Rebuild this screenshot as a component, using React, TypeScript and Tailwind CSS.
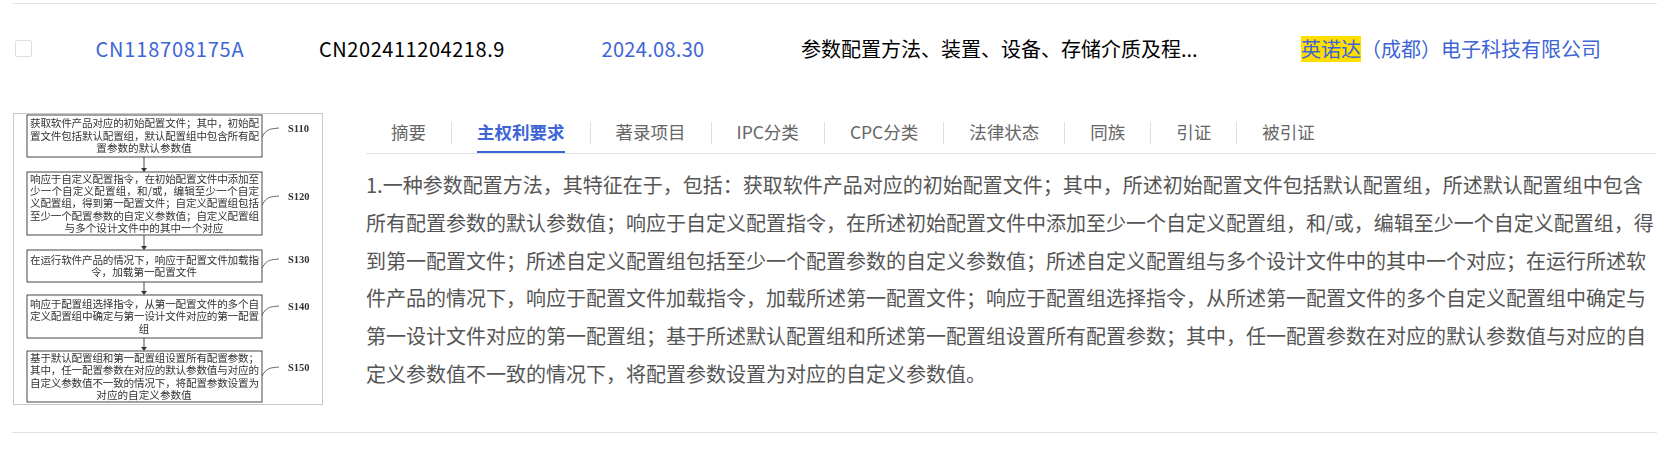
import React from 'react';

const tabs = ['摘要', '主权利要求', '著录项目', 'IPC分类', 'CPC分类', '法律状态', '同族', '引证', '被引证'];

const claim =
  '1.一种参数配置方法，其特征在于，包括：获取软件产品对应的初始配置文件；其中，所述初始配置文件包括默认配置组，所述默认配置组中包含所有配置参数的默认参数值；响应于自定义配置指令，在所述初始配置文件中添加至少一个自定义配置组，和/或，编辑至少一个自定义配置组，得到第一配置文件；所述自定义配置组包括至少一个配置参数的自定义参数值；所述自定义配置组与多个设计文件中的其中一个对应；在运行所述软件产品的情况下，响应于配置文件加载指令，加载所述第一配置文件；响应于配置组选择指令，从所述第一配置文件的多个自定义配置组中确定与第一设计文件对应的第一配置组；基于所述默认配置组和所述第一配置组设置所有配置参数；其中，任一配置参数在对应的默认参数值与对应的自定义参数值不一致的情况下，将配置参数设置为对应的自定义参数值。';

const steps = [
  { y: 2, h: 42, label: 'S110', labelY: 17, lines: [['获取软件产品对应的初始配置文件；其中，初始配', 1], ['置文件包括默认配置组，默认配置组中包含所有配', 1], ['置参数的默认参数值', 0]] },
  { y: 59, h: 63, label: 'S120', labelY: 85, lines: [['响应于自定义配置指令，在初始配置文件中添加至', 1], ['少一个自定义配置组，和/或，编辑至少一个自定', 1], ['义配置组，得到第一配置文件；自定义配置组包括', 1], ['至少一个配置参数的自定义参数值；自定义配置组', 1], ['与多个设计文件中的其中一个对应', 0]] },
  { y: 137, h: 32, label: 'S130', labelY: 148, lines: [['在运行软件产品的情况下，响应于配置文件加载指', 1], ['令，加载第一配置文件', 0]] },
  { y: 182, h: 43, label: 'S140', labelY: 195, lines: [['响应于配置组选择指令，从第一配置文件的多个自', 1], ['定义配置组中确定与第一设计文件对应的第一配置', 1], ['组', 0]] },
  { y: 238, h: 51, label: 'S150', labelY: 256, lines: [['基于默认配置组和第一配置组设置所有配置参数；', 1], ['其中，任一配置参数在对应的默认参数值与对应的', 1], ['自定义参数值不一致的情况下，将配置参数设置为', 1], ['对应的自定义参数值', 0]] },
] as const;

function FlowChart() {
  return (
    <svg width="310" height="292" viewBox="0 0 310 292" className="block shrink-0 blur-[0.35px]">
      <rect x="0.5" y="0.5" width="309" height="291" fill="#fff" stroke="#c8c8c8" />
      {steps.map((s, i) => {
        const next = steps[i + 1];
        return (
          <g key={s.label}>
            <rect x="14" y={s.y} width="235" height={s.h} fill="#fff" stroke="#333" strokeWidth="0.9" />
            {s.lines.map(([text, full], j) => {
              const top = s.y + (s.h - s.lines.length * 12.4) / 2 + 10 + j * 12.4;
              return (
                <text
                  key={j}
                  x={full ? 17 : 131}
                  y={top}
                  fontSize="10.6"
                  fill="#333"
                  textAnchor={full ? 'start' : 'middle'}
                  textLength={full ? 229 : undefined}
                  fontFamily="'Noto Sans CJK SC', sans-serif"
                >
                  {text}
                </text>
              );
            })}
            <path
              d={`M249 ${s.labelY + 7} C254 ${s.labelY - 2} 258 ${s.labelY - 1} 266 ${s.labelY - 2}`}
              fill="none"
              stroke="#444"
              strokeWidth="0.8"
            />
            <text x="275" y={s.labelY + 2} fontSize="10.5" fontWeight="700" fill="#333" fontFamily="'Liberation Serif', serif">
              {s.label}
            </text>
            {next && (
              <>
                <line x1="131" y1={s.y + s.h} x2="131" y2={next.y - 3} stroke="#333" strokeWidth="0.9" />
                <path d={`M128 ${next.y - 4} L134 ${next.y - 4} L131 ${next.y} Z`} fill="#333" />
              </>
            )}
          </g>
        );
      })}
    </svg>
  );
}

export default function App() {
  return (
    <div className="w-[1669px] h-[449px] bg-white overflow-hidden pt-[3px] font-['Noto_Sans_CJK_SC','Noto_Sans',sans-serif]">
      <div className="h-[1px] mx-[12px] bg-[#e4e4e8]" />

      <div className="flex items-center h-[89px] text-[20px]">
        <div className="w-[45px] pl-[15px]">
          <div className="w-[17px] h-[17px] border border-[#dcdfe6] rounded-[2px] bg-white" />
        </div>
        <div className="w-[250px] text-center text-[#3d65d6] tracking-[0.8px]">CN118708175A</div>
        <div className="w-[234px] text-center text-black tracking-[0.55px]">CN202411204218.9</div>
        <div className="w-[248px] text-center text-[#3d65d6] tracking-[0.3px]">2024.08.30</div>
        <div className="w-[500px] pl-[24px] text-black">参数配置方法、装置、设备、存储介质及程...</div>
        <div className="pl-[24px] text-[#3d65d6]">
          <span className="inline-block bg-[#ffde00] leading-[26px]">英诺达</span>（成都）电子科技有限公司
        </div>
      </div>

      <div className="flex mt-[20px] ml-[13px]">
        <FlowChart />
        <div className="ml-[43px] w-[1290px]">
          <div className="flex items-start pt-[9px] h-[41px] border-b border-[#e0e0e8] text-[17.5px] text-[#666]">
            {tabs.map((t, i) => (
              <div key={t} className="flex items-center h-[22px] pb-[2px] px-[25px] border-r last:border-r-0 border-[#dcdfe6]">
                <span className={i === 1 ? 'relative font-bold text-[#3d65d6]' : ''}>
                  {t}
                  {i === 1 && <span className="absolute left-0 right-0 -bottom-[8px] h-[2px] bg-[#3d65d6]" />}
                </span>
              </div>
            ))}
          </div>
          <p className="mt-[12px] text-[20px] leading-[37.8px] text-[#555]">{claim}</p>
        </div>
      </div>

      <div className="h-[1px] mx-[12px] mt-[27px] bg-[#e0e0e8]" />
    </div>
  );
}
